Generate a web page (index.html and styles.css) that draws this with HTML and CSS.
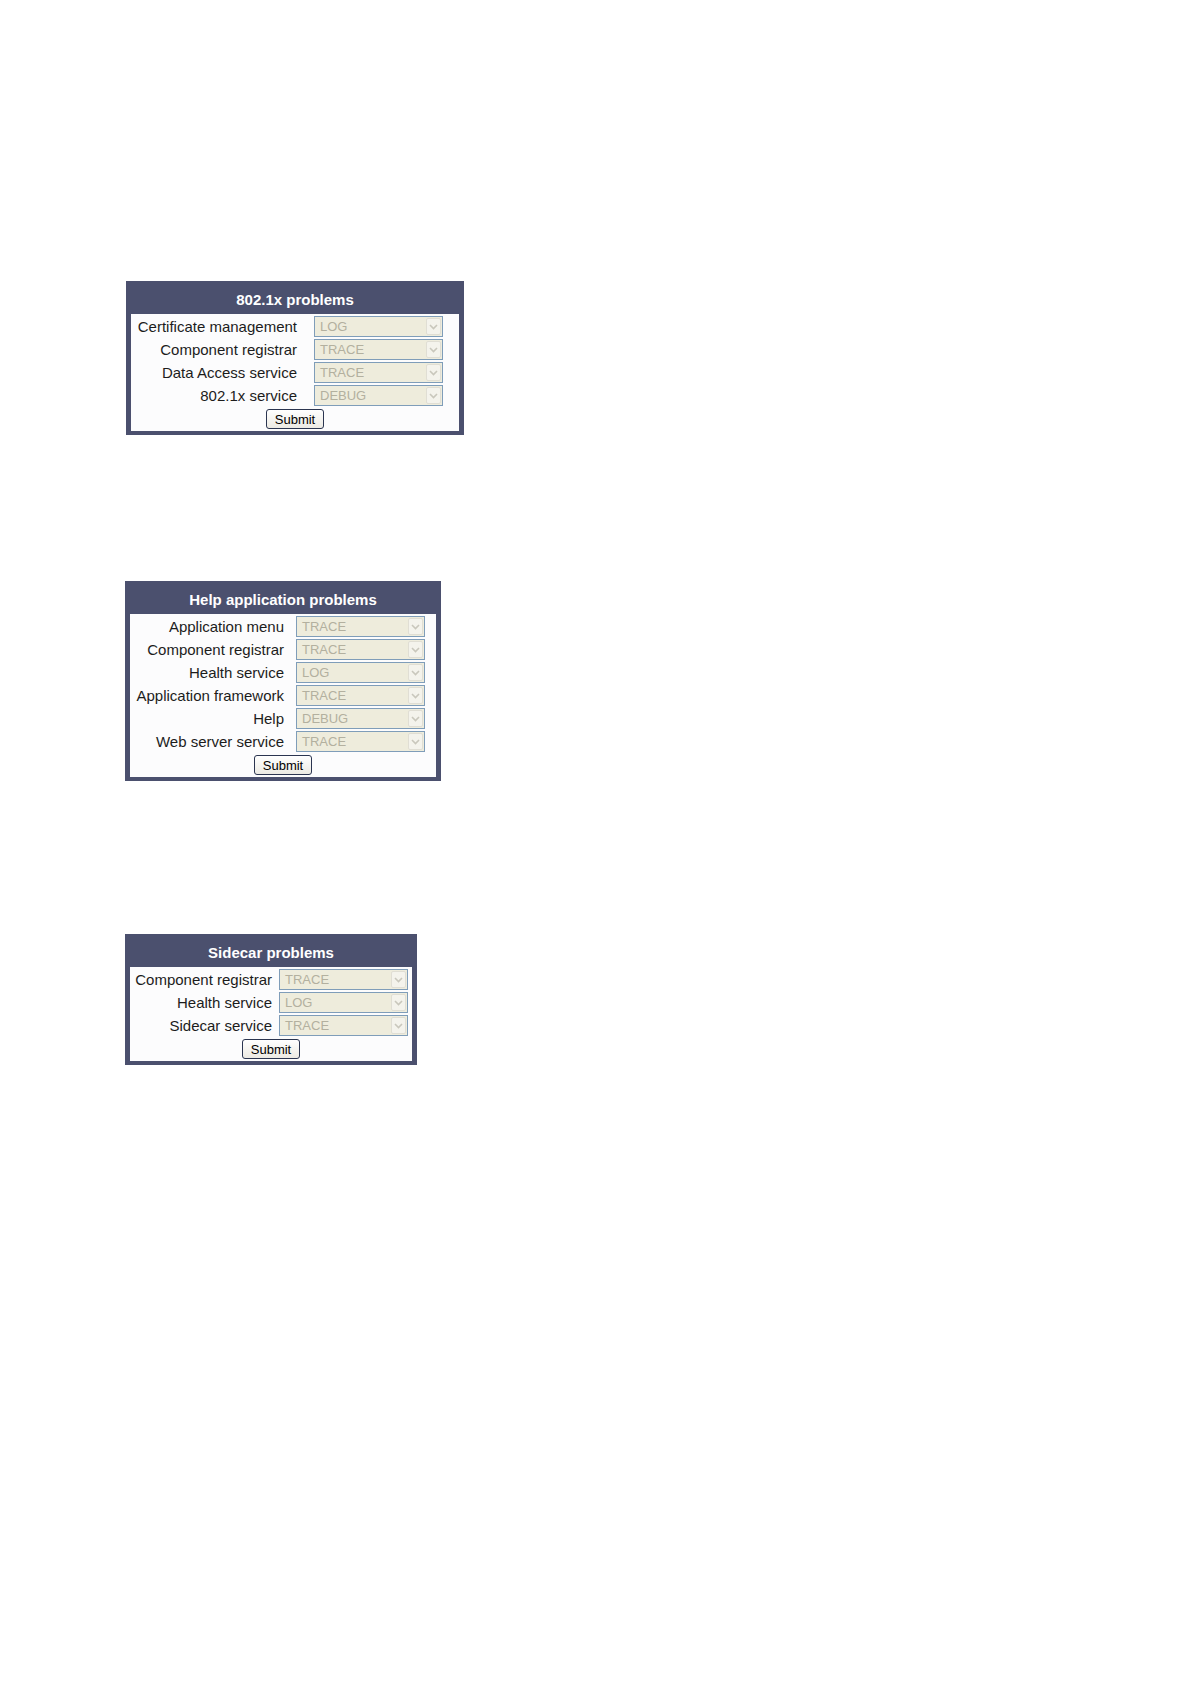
FILE: index.html
```html
<!DOCTYPE html>
<html lang="en">
<head>
<meta charset="utf-8">
<title>Problems</title>
<link rel="stylesheet" href="styles.css">
</head>
<body>
<main class="page">
  <section class="panel panel-dot1x">
    <h2 class="panel-title">802.1x problems</h2>
    <form class="panel-body">
      <div class="fields">
        <label class="field-label">Certificate management</label>
        <div class="select"><span class="select-value">LOG</span><span class="select-arrow"><svg width="9" height="6" viewBox="0 0 9 6"><path d="M1 1 L4.5 4.5 L8 1" fill="none" stroke="#c9c7bc" stroke-width="1.6"/></svg></span></div>
        <label class="field-label">Component registrar</label>
        <div class="select"><span class="select-value">TRACE</span><span class="select-arrow"><svg width="9" height="6" viewBox="0 0 9 6"><path d="M1 1 L4.5 4.5 L8 1" fill="none" stroke="#c9c7bc" stroke-width="1.6"/></svg></span></div>
        <label class="field-label">Data Access service</label>
        <div class="select"><span class="select-value">TRACE</span><span class="select-arrow"><svg width="9" height="6" viewBox="0 0 9 6"><path d="M1 1 L4.5 4.5 L8 1" fill="none" stroke="#c9c7bc" stroke-width="1.6"/></svg></span></div>
        <label class="field-label">802.1x service</label>
        <div class="select"><span class="select-value">DEBUG</span><span class="select-arrow"><svg width="9" height="6" viewBox="0 0 9 6"><path d="M1 1 L4.5 4.5 L8 1" fill="none" stroke="#c9c7bc" stroke-width="1.6"/></svg></span></div>
      </div>
      <div class="actions"><button class="submit" type="button">Submit</button></div>
    </form>
  </section>

  <section class="panel panel-help">
    <h2 class="panel-title">Help application problems</h2>
    <form class="panel-body">
      <div class="fields">
        <label class="field-label">Application menu</label>
        <div class="select"><span class="select-value">TRACE</span><span class="select-arrow"><svg width="9" height="6" viewBox="0 0 9 6"><path d="M1 1 L4.5 4.5 L8 1" fill="none" stroke="#c9c7bc" stroke-width="1.6"/></svg></span></div>
        <label class="field-label">Component registrar</label>
        <div class="select"><span class="select-value">TRACE</span><span class="select-arrow"><svg width="9" height="6" viewBox="0 0 9 6"><path d="M1 1 L4.5 4.5 L8 1" fill="none" stroke="#c9c7bc" stroke-width="1.6"/></svg></span></div>
        <label class="field-label">Health service</label>
        <div class="select"><span class="select-value">LOG</span><span class="select-arrow"><svg width="9" height="6" viewBox="0 0 9 6"><path d="M1 1 L4.5 4.5 L8 1" fill="none" stroke="#c9c7bc" stroke-width="1.6"/></svg></span></div>
        <label class="field-label">Application framework</label>
        <div class="select"><span class="select-value">TRACE</span><span class="select-arrow"><svg width="9" height="6" viewBox="0 0 9 6"><path d="M1 1 L4.5 4.5 L8 1" fill="none" stroke="#c9c7bc" stroke-width="1.6"/></svg></span></div>
        <label class="field-label">Help</label>
        <div class="select"><span class="select-value">DEBUG</span><span class="select-arrow"><svg width="9" height="6" viewBox="0 0 9 6"><path d="M1 1 L4.5 4.5 L8 1" fill="none" stroke="#c9c7bc" stroke-width="1.6"/></svg></span></div>
        <label class="field-label">Web server service</label>
        <div class="select"><span class="select-value">TRACE</span><span class="select-arrow"><svg width="9" height="6" viewBox="0 0 9 6"><path d="M1 1 L4.5 4.5 L8 1" fill="none" stroke="#c9c7bc" stroke-width="1.6"/></svg></span></div>
      </div>
      <div class="actions"><button class="submit" type="button">Submit</button></div>
    </form>
  </section>

  <section class="panel panel-sidecar">
    <h2 class="panel-title">Sidecar problems</h2>
    <form class="panel-body">
      <div class="fields">
        <label class="field-label">Component registrar</label>
        <div class="select"><span class="select-value">TRACE</span><span class="select-arrow"><svg width="9" height="6" viewBox="0 0 9 6"><path d="M1 1 L4.5 4.5 L8 1" fill="none" stroke="#c9c7bc" stroke-width="1.6"/></svg></span></div>
        <label class="field-label">Health service</label>
        <div class="select"><span class="select-value">LOG</span><span class="select-arrow"><svg width="9" height="6" viewBox="0 0 9 6"><path d="M1 1 L4.5 4.5 L8 1" fill="none" stroke="#c9c7bc" stroke-width="1.6"/></svg></span></div>
        <label class="field-label">Sidecar service</label>
        <div class="select"><span class="select-value">TRACE</span><span class="select-arrow"><svg width="9" height="6" viewBox="0 0 9 6"><path d="M1 1 L4.5 4.5 L8 1" fill="none" stroke="#c9c7bc" stroke-width="1.6"/></svg></span></div>
      </div>
      <div class="actions"><button class="submit" type="button">Submit</button></div>
    </form>
  </section>
</main>
</body>
</html>
```

FILE: styles.css
```css
html, body {
  margin: 0;
  background: #ffffff;
}

body {
  font-family: "Liberation Sans", Arial, sans-serif;
  width: 1190px;
  min-height: 1684px;
}

.page {
  display: flex;
  flex-direction: column;
  align-items: flex-start;
  padding: 281px 0 0 125px;
}

.panel {
  box-sizing: border-box;
  background: #4b506e;
  padding: 4px 5px 4px 5px;
}

.panel-dot1x {
  width: 338px;
  margin-left: 1px;
  --gap: 17px;
  --pr: 16px;
  --pl: 3px;
}

.panel-help {
  width: 316px;
  margin-top: 146px;
  --gap: 12px;
  --pr: 11px;
  --pl: 5px;
}

.panel-sidecar {
  width: 292px;
  margin-top: 153px;
  --gap: 7px;
  --pr: 4px;
  --pl: 5px;
}

.panel-title {
  margin: 0;
  height: 29px;
  line-height: 29px;
  text-align: center;
  font-size: 15px;
  font-weight: bold;
  color: #ffffff;
}

.panel-body {
  margin: 0;
  background: #fcfcfd;
  padding: 2px 0 2px 0;
}

.fields {
  display: grid;
  grid-template-columns: minmax(0, 1fr) 129px;
  column-gap: var(--gap);
  row-gap: 2px;
  padding: 0 var(--pr) 0 var(--pl);
}

.field-label {
  text-align: right;
  font-size: 15px;
  line-height: 21px;
  color: #1c1c1c;
  white-space: nowrap;
}

.select {
  box-sizing: border-box;
  height: 21px;
  border: 1px solid #7f9db9;
  background: #eeecdc;
  display: flex;
  align-items: center;
  justify-content: space-between;
  padding: 1px 1px 1px 5px;
}

.select-value {
  font-size: 13px;
  color: #b3b09f;
}

.select-arrow {
  box-sizing: border-box;
  width: 15px;
  height: 17px;
  border: 1px solid #e0ded4;
  border-radius: 2px;
  background: #f4f3ec;
  display: flex;
  align-items: center;
  justify-content: center;
}

.actions {
  display: flex;
  justify-content: center;
  padding-top: 3px;
}

.submit {
  box-sizing: border-box;
  width: 58px;
  height: 20px;
  padding: 0;
  font-family: "Liberation Sans", Arial, sans-serif;
  font-size: 13px;
  color: #000000;
  border: 1px solid #2b3550;
  border-radius: 3px;
  background: linear-gradient(#ffffff, #eceae3);
}
```
